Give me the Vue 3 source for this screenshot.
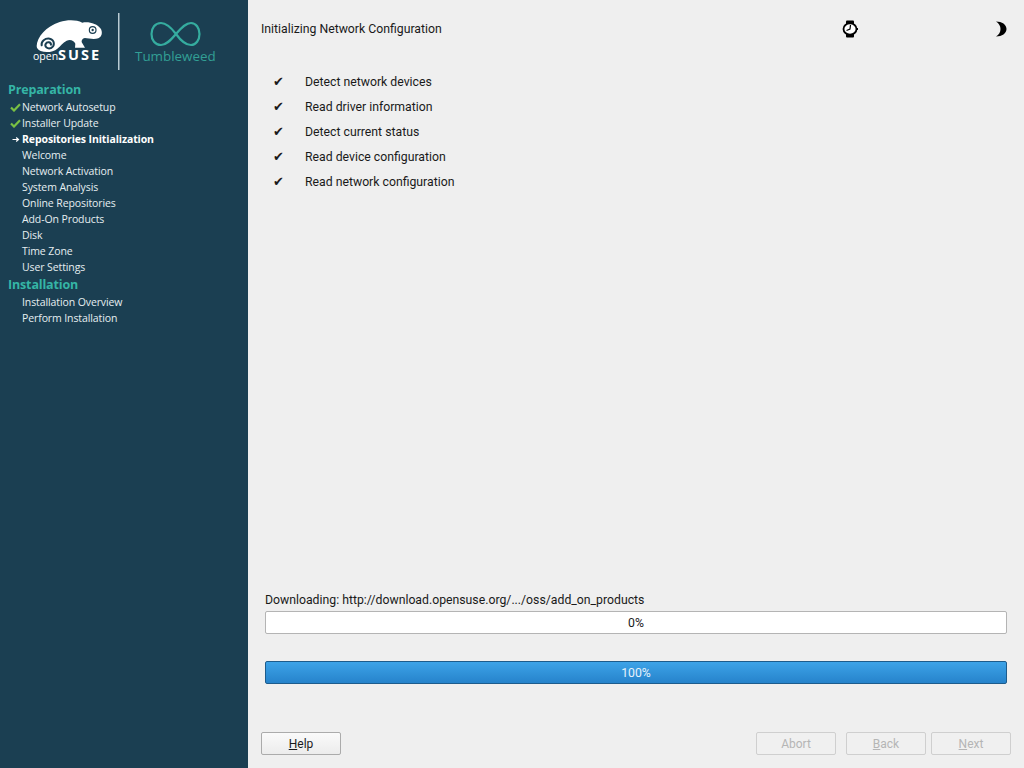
<script setup>
const sections = [
  {
    title: 'Preparation',
    items: [
      { label: 'Network Autosetup', state: 'done' },
      { label: 'Installer Update', state: 'done' },
      { label: 'Repositories Initialization', state: 'current' },
      { label: 'Welcome' },
      { label: 'Network Activation' },
      { label: 'System Analysis' },
      { label: 'Online Repositories' },
      { label: 'Add-On Products' },
      { label: 'Disk' },
      { label: 'Time Zone' },
      { label: 'User Settings' }
    ]
  },
  {
    title: 'Installation',
    items: [
      { label: 'Installation Overview' },
      { label: 'Perform Installation' }
    ]
  }
]

const steps = [
  'Detect network devices',
  'Read driver information',
  'Detect current status',
  'Read device configuration',
  'Read network configuration'
]
</script>

<template>
  <div class="screen">
    <aside class="sidebar">
      <svg class="logo" viewBox="0 0 248 78" width="248" height="78">
        <g transform="translate(25 10) scale(0.3333)">
          <path fill="#fff" d="M35 108 C36 82 62 50 104 36 C128 29 154 29 172 38 C190 34 216 40 228 57 C233 68 231 80 220 85 C206 89 190 85 180 84 C170 86 168 94 172 100 L180 113 L150 113 L151 101 C146 91 136 88 125 92 C113 98 107 108 97 116 C85 127 62 129 47 123 C39 119 35 114 35 108 Z" />
          <path fill="none" stroke="#1b3f52" stroke-width="6" stroke-linecap="round" d="M78 104 C78 96 66 94 62 102 C58 110 68 118 78 114 C90 108 90 90 74 86 C60 84 48 94 50 106" />
          <circle cx="203" cy="60" r="10" fill="none" stroke="#1b3f52" stroke-width="3.500" />
          <circle cx="203" cy="60" r="3.500" fill="#1b3f52" />
        </g>
        <text x="33" y="60" class="logo-open">open</text>
        <text x="58" y="60" class="logo-suse">SUSE</text>
        <rect x="118" y="13" width="1.500" height="57" fill="#b9cbd3" />
        <path fill="none" stroke="#35ac9f" stroke-width="2.200" d="M176 34 C170 26 165 23 161 23 C155 23 151.500 28 151.500 34 C151.500 40 155 45 161 45 C166 45 170 41 176 34 C182 27 186 23 191 23 C196 23 199.500 28 199.500 34 C199.500 40 196 45 191 45 C186 45 181 41 176 34 Z" />
        <text x="135" y="61" class="logo-tw">Tumbleweed</text>
      </svg>

      <nav class="nav">
        <section v-for="section in sections" :key="section.title">
          <h2 class="nav-title">{{ section.title }}</h2>
          <div
            v-for="item in section.items"
            :key="item.label"
            class="nav-item"
            :class="{ current: item.state === 'current' }"
          >
            <svg v-if="item.state === 'done'" class="nav-icon" viewBox="0 0 11 9" width="11" height="9">
              <path fill="none" stroke="#7ac143" stroke-width="2.200" d="M1 4.500 L4 7.500 L10 1.200" />
            </svg>
            <svg v-else-if="item.state === 'current'" class="nav-icon" viewBox="0 0 11 9" width="11" height="9">
              <path fill="none" stroke="#fff" stroke-width="1.200" d="M2.500 4.500 H8.500 M6.200 2.500 L8.500 4.500 L6.200 6.500" />
            </svg>
            <span class="nav-label">{{ item.label }}</span>
          </div>
        </section>
      </nav>
    </aside>

    <main class="main">
      <header class="header">
        <span class="title">Initializing Network Configuration</span>
        <svg class="watch" viewBox="0 0 18 18" width="18" height="18">
          <rect x="5" y="0.500" width="8" height="17" rx="1" fill="#000" />
          <ellipse cx="9" cy="9" rx="6.500" ry="5.600" fill="#fff" stroke="#000" stroke-width="1.800" />
          <path fill="none" stroke="#000" stroke-width="1.200" d="M9.500 5 L9 9 L5.500 10.500" />
          <rect x="15.500" y="8" width="1.500" height="2" fill="#000" />
        </svg>
        <svg class="moon" viewBox="0 0 12 16" width="12" height="16">
          <path fill="#000" d="M1 0.500 C7 0.500 11.500 3.500 11.500 8 C11.500 12.500 7 15.500 1 15.500 C4 13.500 5.500 11 5.500 8 C5.500 5 4 2.500 1 0.500 Z" />
        </svg>
      </header>

      <ul class="steps">
        <li v-for="step in steps" :key="step" class="step">
          <span class="tick">✔</span>
          <span>{{ step }}</span>
        </li>
      </ul>

      <div class="progress-area">
        <div class="progress-label">Downloading: http://download.opensuse.org/.../oss/add_on_products</div>
        <div class="bar">0%</div>
        <div class="bar full">100%</div>
      </div>

      <footer class="buttons">
        <button class="btn"><u>H</u>elp</button>
        <span class="gap"></span>
        <button class="btn abort" disabled>Abort</button>
        <button class="btn back" disabled><u>B</u>ack</button>
        <button class="btn" disabled><u>N</u>ext</button>
      </footer>
    </main>
  </div>
</template>

<style scoped>
.screen {
  display: flex;
  width: 1024px;
  height: 768px;
  overflow: hidden;
  background: #efefef;
  color: #1a1a1a;
  font-family: Roboto, "Liberation Sans", sans-serif;
  font-size: 12.25px;
}

.sidebar {
  flex: 0 0 248px;
  height: 768px;
  background: #1b3f52;
}

.logo {
  display: block;
  margin-bottom: 2px;
}

.logo-open {
  fill: #fff;
  font-family: "Open Sans", sans-serif;
  font-size: 10.5px;
}

.logo-suse {
  fill: #fff;
  font-family: "Open Sans", sans-serif;
  font-size: 14.5px;
  font-weight: 700;
  letter-spacing: 2px;
}

.logo-tw {
  fill: #329f95;
  font-family: "Open Sans", sans-serif;
  font-size: 13.4px;
}

.nav-title {
  margin: 0;
  padding-left: 8px;
  height: 19px;
  line-height: 19px;
  color: #35b5a6;
  font-family: "Open Sans", sans-serif;
  font-size: 12.5px;
  font-weight: 700;
  letter-spacing: -0.15px;
}

.nav-item {
  position: relative;
  height: 16px;
  padding-left: 22px;
  line-height: 16px;
  color: #e6eef1;
  font-family: "Open Sans", sans-serif;
  font-size: 10.5px;
  letter-spacing: -0.1px;
  white-space: nowrap;
}

.nav-item.current {
  color: #fff;
  font-weight: 700;
}

.nav-icon {
  position: absolute;
  left: 10px;
  top: 4px;
}

.main {
  flex: 1;
  display: flex;
  flex-direction: column;
  padding: 19px 13px 13px;
}

.header {
  display: flex;
  align-items: center;
  height: 19px;
}

.title {
  flex: 1;
}

.watch {
  margin-right: 136px;
}

.moon {
  margin-right: 4px;
}

.steps {
  list-style: none;
  margin: 31px 0 0;
  padding: 0;
  flex: 1;
}

.step {
  display: flex;
  align-items: center;
  height: 25px;
}

.tick {
  width: 44px;
  padding-left: 12px;
  box-sizing: border-box;
  font-family: "DejaVu Sans", sans-serif;
  font-size: 13px;
}

.progress-area {
  padding: 0 4px;
}

.progress-label {
  height: 14px;
  line-height: 16px;
  margin-bottom: 5px;
}

.bar {
  box-sizing: border-box;
  height: 23px;
  line-height: 23px;
  text-align: center;
  background: #fff;
  border: 1px solid #b4b4b4;
  border-radius: 2px;
}

.bar.full {
  margin-top: 27px;
  color: #e6f2fb;
  background: linear-gradient(#3da3e8, #2683cb);
  border-color: #1d5c8c;
}

.buttons {
  display: flex;
  margin-top: 48px;
}

.gap {
  flex: 1;
}

.btn {
  width: 80px;
  height: 23px;
  padding: 0;
  background: linear-gradient(#fafafa, #ececec);
  border: 1px solid #ababab;
  border-radius: 2px;
  color: #1a1a1a;
  font-family: Roboto, sans-serif;
  font-size: 12px;
}

.btn:disabled {
  color: #b5b5b5;
  border-color: #cfcfcf;
  background: #f0f0f0;
}

.abort {
  margin-right: 10px;
}

.back {
  margin-right: 5px;
}
</style>
